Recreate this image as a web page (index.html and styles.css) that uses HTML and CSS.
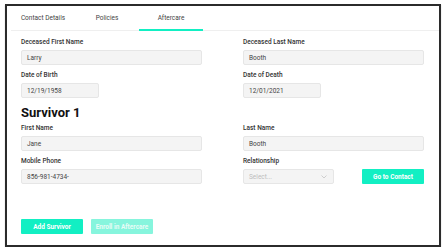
FILE: index.html
```html
<!DOCTYPE html>
<html lang="en">
<head>
  <meta charset="UTF-8">
  <title>Aftercare</title>
  <link rel="stylesheet" href="styles.css">
</head>
<body>
  <div class="frame">
    <div class="tabs">
      <div class="tab">Contact Details</div>
      <div class="tab">Policies</div>
      <div class="tab active">Aftercare</div>
    </div>

    <div class="form">
      <div class="field">
        <label>Deceased First Name</label>
        <div class="input">Larry</div>
      </div>
      <div class="field">
        <label>Deceased Last Name</label>
        <div class="input">Booth</div>
      </div>

      <div class="field">
        <label>Date of Birth</label>
        <div class="input date">12/19/1958</div>
      </div>
      <div class="field">
        <label>Date of Death</label>
        <div class="input date">12/01/2021</div>
      </div>

      <h2 class="section-title">Survivor 1</h2>

      <div class="field">
        <label>First Name</label>
        <div class="input">Jane</div>
      </div>
      <div class="field">
        <label>Last Name</label>
        <div class="input">Booth</div>
      </div>

      <div class="field">
        <label>Mobile Phone</label>
        <div class="input">856-981-4734-</div>
      </div>
      <div class="field">
        <label>Relationship</label>
        <div class="select-row">
          <div class="input select">
            <span class="placeholder">Select...</span>
            <svg class="chevron" width="6" height="4" viewBox="0 0 6 4"><path d="M0.5 0.5 L3 3 L5.5 0.5" fill="none" stroke="#c4c4c4" stroke-width="0.8"/></svg>
          </div>
          <button class="btn">Go to Contact</button>
        </div>
      </div>
    </div>

    <div class="actions">
      <button class="btn">Add Survivor</button>
      <button class="btn disabled">Enroll in Aftercare</button>
    </div>
  </div>
</body>
</html>
```

FILE: styles.css
```css
body {
  margin: 0;
  background: #fff;
  font-family: Roboto, 'Liberation Sans', sans-serif;
  color: #333;
}

.frame {
  box-sizing: border-box;
  width: 436px;
  height: 243px;
  margin: 4px 0 0 5px;
  border: 2px solid #2b2b2b;
  box-shadow: 0 1px 1px rgba(0, 0, 0, 0.25);
  background: #fff;
}

.tabs {
  display: flex;
  margin-left: 4px;
  border-bottom: 1px solid #efefef;
}

.tab {
  width: 64px;
  height: 25px;
  padding-top: 1px;
  box-sizing: border-box;
  display: flex;
  align-items: center;
  justify-content: center;
  font-size: 6.5px;
  color: #444;
  border-bottom: 2px solid transparent;
  margin-bottom: -1px;
}

.tab.active {
  border-bottom-color: #12efc3;
}

.form {
  display: grid;
  grid-template-columns: 181px 181px;
  column-gap: 41px;
  row-gap: 6px;
  padding: 7px 0 0 14px;
}

.field label {
  display: block;
  font-size: 6.5px;
  line-height: 8px;
  font-weight: 500;
  color: #333;
  margin-bottom: 4px;
}

.input {
  box-sizing: border-box;
  height: 15px;
  padding: 0 5px;
  display: flex;
  align-items: center;
  background: #f4f4f4;
  border: 1px solid #e6e6e6;
  border-radius: 2px;
  font-size: 6.5px;
  color: #444;
}

.input.date {
  width: 78px;
}

.section-title {
  grid-column: 1 / -1;
  margin: 1px 0 -3px;
  font-size: 13px;
  line-height: 16px;
  font-weight: 700;
  color: #111;
}

.select-row {
  display: flex;
  justify-content: space-between;
}

.input.select {
  width: 91px;
  justify-content: space-between;
  padding-right: 6px;
}

.placeholder {
  color: #bdbdbd;
}

.btn {
  box-sizing: border-box;
  width: 62px;
  height: 15px;
  padding: 0;
  border: none;
  border-radius: 1px;
  background: #12efc3;
  color: #fff;
  font-family: Roboto, 'Liberation Sans', sans-serif;
  font-size: 6.5px;
  font-weight: 700;
}

.btn.disabled {
  background: #86f5dd;
  color: #e8fcf6;
}

.actions {
  display: flex;
  gap: 8px;
  padding: 35px 0 0 14px;
}
```
